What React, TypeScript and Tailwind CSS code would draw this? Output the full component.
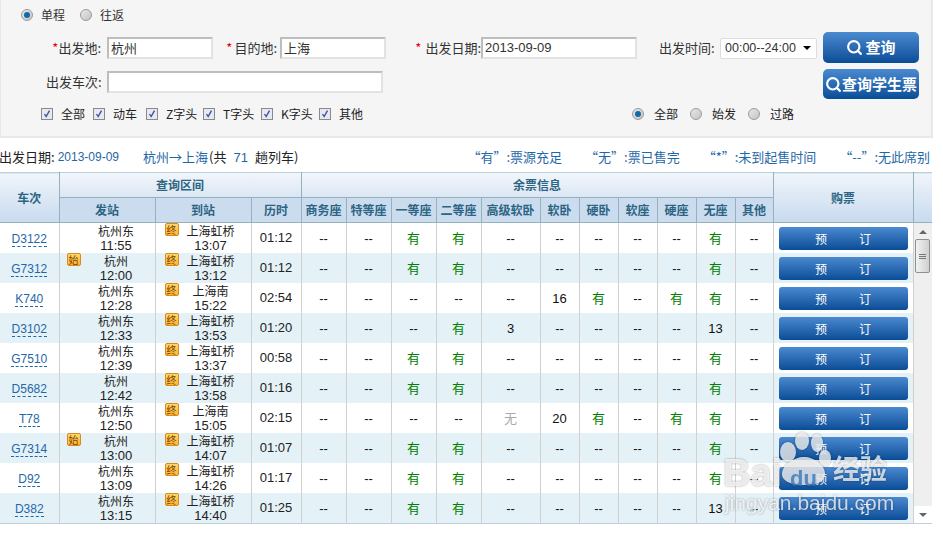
import React from 'react';
import { Search } from 'lucide-react';

const font = "font-['Noto_Sans_CJK_SC','Liberation_Sans',sans-serif]";
const latin = "font-['Liberation_Sans',sans-serif]";

interface Train {
  no: string;
  from: string;
  depart: string;
  to: string;
  arrive: string;
  span: string;
  start?: boolean;
  seats: string[];
}

const d = '--';
const gao = [d, d, '有', '有', d, d, d, d, d, '有', d];

const trains: Train[] = [
  { no: 'D3122', from: '杭州东', depart: '11:55', to: '上海虹桥', arrive: '13:07', span: '01:12', seats: gao },
  { no: 'G7312', from: '杭州', depart: '12:00', to: '上海虹桥', arrive: '13:12', span: '01:12', start: true, seats: gao },
  { no: 'K740', from: '杭州东', depart: '12:28', to: '上海南', arrive: '15:22', span: '02:54', seats: [d, d, d, d, d, '16', '有', d, '有', '有', d] },
  { no: 'D3102', from: '杭州东', depart: '12:33', to: '上海虹桥', arrive: '13:53', span: '01:20', seats: [d, d, d, '有', '3', d, d, d, d, '13', d] },
  { no: 'G7510', from: '杭州东', depart: '12:39', to: '上海虹桥', arrive: '13:37', span: '00:58', seats: gao },
  { no: 'D5682', from: '杭州', depart: '12:42', to: '上海虹桥', arrive: '13:58', span: '01:16', seats: gao },
  { no: 'T78', from: '杭州东', depart: '12:50', to: '上海南', arrive: '15:05', span: '02:15', seats: [d, d, d, d, '无', '20', '有', d, '有', '有', d] },
  { no: 'G7314', from: '杭州', depart: '13:00', to: '上海虹桥', arrive: '14:07', span: '01:07', start: true, seats: gao },
  { no: 'D92', from: '杭州东', depart: '13:09', to: '上海虹桥', arrive: '14:26', span: '01:17', seats: gao },
  { no: 'D382', from: '杭州东', depart: '13:15', to: '上海虹桥', arrive: '14:40', span: '01:25', seats: [d, d, '有', '有', d, d, d, d, d, '13', d] },
];

const colWidths = [59, 96, 96, 50, 45, 45, 45, 45, 59, 39, 39, 39, 39, 39, 38, 140, 19];
const seatHeads = ['商务座', '特等座', '一等座', '二等座', '高级软卧', '软卧', '硬卧', '软座', '硬座', '无座', '其他'];

const Radio = ({ on }: { on?: boolean }) => (
  <span className="flex h-3 w-3 shrink-0 items-center justify-center rounded-full border border-[#9a9a9a] bg-gradient-to-br from-[#e8e8e8] to-[#c4c4c4]">
    {on && <span className="h-1.5 w-1.5 rounded-full bg-[#0f6aa8]" />}
  </span>
);

const Check = () => (
  <span className="flex h-3 w-3 shrink-0 items-center justify-center border border-[#8a8a8a] bg-[#e6e9f2] text-[#3a4f9a]">
    <svg viewBox="0 0 12 12" className="h-2.5 w-2.5">
      <path d="M3 6l2 3 4-7" fill="none" stroke="currentColor" strokeWidth="1.6" />
    </svg>
  </span>
);

const Field = ({ value, width }: { value?: string; width: string }) => (
  <div className={`flex h-[22px] items-center border-2 border-[#e2e2e2] border-t-[#bdbdbd] border-l-[#bdbdbd] bg-white pb-0.5 pl-0.5 text-[13px] leading-none text-[#333] ${width}`}>
    {value}
  </div>
);

const Badge = ({ text }: { text: string }) => (
  <span className="flex h-[13px] w-[14px] items-center justify-center rounded-[2px] border border-[#d98a1c] bg-gradient-to-b from-[#ffd76a] to-[#ffb52e] text-[10px] leading-none text-[#7a4300]">
    {text}
  </span>
);

const blueBtn = 'bg-gradient-to-b from-[#4a8ad0] to-[#074d97]';

const Seat = ({ value }: { value: string }) => {
  if (value === '有') return <span className="text-[13px] text-[#008000]">有</span>;
  if (value === '无') return <span className="text-[13px] text-[#aaa]">无</span>;
  return <span className={`${latin} text-[13px] text-[#111]`}>{value}</span>;
};

const headTh = 'border-r border-b border-[#94b1bd] text-[12px] font-bold text-[#2b6583]';

const App = () => (
  <div className={`relative h-[534px] w-[943px] overflow-hidden bg-white ${font}`}>
    {/* search form */}
    <div className="h-[138px] w-[933px] border-r-2 border-b-2 border-l border-[#e8e8e8] bg-[#f5f5f5] text-[13px] text-[#333]">
      <div className="flex h-[30px] items-center pl-[20px] text-[12px]">
        <Radio on />
        <span className="ml-[8px] w-[26px]">单程</span>
        <span className="ml-[13px]"><Radio /></span>
        <span className="ml-[8px]">往返</span>
      </div>
      <div className="flex h-[70px]">
        <div className="w-[822px]">
          <div className="mt-[7px] flex h-[22px] items-center">
            <span className="w-[106px] pr-[6px] text-right"><b className="font-normal text-red-600">*</b>出发地:</span>
            <Field value="杭州" width="w-[106px]" />
            <span className="w-[67px] pr-[3px] text-right"><b className="mr-[2px] font-normal text-red-600">*</b>目的地:</span>
            <Field value="上海" width="w-[106px]" />
            <span className="w-[95px] text-right whitespace-nowrap"><b className="mr-[4px] font-normal text-red-600">*</b>出发日期:</span>
            <div className={latin}><Field value="2013-09-09" width="w-[156px]" /></div>
            <span className="ml-[22px] w-[61px]">出发时间:</span>
            <div className={`${latin} flex h-[21px] w-[97px] items-center justify-between rounded-[2px] border border-[#ddd] bg-white pr-[5px] pl-[4px] text-[12.5px] text-[#333]`}>
              00:00--24:00
              <span className="h-0 w-0 border-x-[4px] border-t-[4px] border-x-transparent border-t-black" />
            </div>
          </div>
          <div className="mt-[12px] flex items-center">
            <span className="w-[106px] pr-[6px] pl-[45px] whitespace-nowrap">出发车次:</span>
            <Field width="w-[276px]" />
          </div>
        </div>
        <div className="w-[96px] pt-[2px]">
          <div className={`flex h-[31px] items-center justify-center gap-0.5 rounded-[5px] text-[15px] font-bold text-white ${blueBtn}`}>
            <Search size={17} strokeWidth={3} />查询
          </div>
          <div className={`mt-[6px] flex h-[30px] items-center justify-center rounded-[5px] text-[15px] font-bold whitespace-nowrap text-white ${blueBtn}`}>
            <Search size={17} strokeWidth={3} />查询学生票
          </div>
        </div>
      </div>
      <div className="flex h-[28px] items-center pl-[40px] text-[12px] text-[#222]">
        <Check /><span className="ml-[8px] w-[32px]">全部</span>
        <Check /><span className="ml-[8px] w-[33px]">动车</span>
        <Check /><span className="ml-[8px] w-[37px]">Z字头</span>
        <Check /><span className="ml-[8px] w-[38px]">T字头</span>
        <Check /><span className="ml-[8px] w-[38px]">K字头</span>
        <Check /><span className="ml-[8px] w-[293px]">其他</span>
        <Radio on /><span className="ml-[10px] w-[36px]">全部</span>
        <Radio /><span className="ml-[10px] w-[36px]">始发</span>
        <Radio /><span className="ml-[10px]">过路</span>
      </div>
    </div>

    {/* summary line */}
    <div className="flex h-[34px] w-[932px] items-center justify-between pt-[4px] text-[13px] whitespace-nowrap">
      <div className="-ml-px flex items-center text-[#222]">
        出发日期:
        <span className={`${latin} ml-[3px] text-[12px] text-[#1f68a8]`}>2013-09-09</span>
        <span className="ml-[24px] text-[#1f68a8]">杭州→上海</span>
        <span className="ml-px">(共<span className={`${latin} mx-[7px] text-[#1f68a8]`}>71</span>趟列车)</span>
      </div>
      <div className="flex text-[#1f68a8]">
        <span className="mr-[23px]">“有”:票源充足</span>
        <span className="mr-[23px]">“无”:票已售完</span>
        <span className="mr-[23px]">“*”:未到起售时间</span>
        <span className="mr-[2px]">“--”:无此席别</span>
      </div>
    </div>

    {/* train table */}
    <table className="w-[932px] table-fixed border-collapse border-t border-b border-[#bcd0d8]">
      <colgroup>
        {colWidths.map((w, i) => (
          <col key={i} style={{ width: w }} />
        ))}
      </colgroup>
      <thead>
        <tr className="h-[25px] bg-gradient-to-b from-[#f2f6fc] to-[#dbe6f3]">
          <th rowSpan={2} className={`${headTh} bg-gradient-to-b from-[#f0f5fb] to-[#c8daee]`}>车次</th>
          <th colSpan={3} className={headTh}>查询区间</th>
          <th colSpan={11} className={headTh}>余票信息</th>
          <th rowSpan={2} className={`${headTh} bg-gradient-to-b from-[#f0f5fb] to-[#c8daee]`}>购票</th>
          <th rowSpan={2} className="border-b border-[#94b1bd] bg-gradient-to-b from-[#f0f5fb] to-[#c8daee]" />
        </tr>
        <tr className="h-[25px] bg-[#ccdcef]">
          <th className={headTh}>发站</th>
          <th className={headTh}>到站</th>
          <th className={headTh}>历时</th>
          {seatHeads.map((h) => (
            <th key={h} className={`${headTh} whitespace-nowrap`}>{h}</th>
          ))}
        </tr>
      </thead>
      <tbody>
        {trains.map((t, i) => (
          <tr key={t.no} className={`h-[30px] ${i % 2 ? 'bg-[#e4f1f7]' : 'bg-white'}`}>
            <td className="border-r border-[#d0d0d0] pb-[4px] text-center align-middle">
              <span className={`${latin} border-b border-dashed border-[#1f68a8] text-[12px] leading-[15px] text-[#1f68a8]`}>{t.no}</span>
            </td>
            <td className="border-r border-[#d0d0d0] p-0 align-middle">
              <div className="relative pl-[18px] text-center text-[12px] leading-[15px] text-[#222]">
                {t.start && <span className="absolute top-0 left-[7px]"><Badge text="始" /></span>}
                <div>{t.from}</div>
                <div className={`${latin} text-[13px]`}>{t.depart}</div>
              </div>
            </td>
            <td className="border-r border-[#d0d0d0] p-0 align-middle">
              <div className="relative text-center text-[12px] leading-[15px] text-[#222]">
                <span className="absolute top-0 left-[9px]"><Badge text="终" /></span>
                <div className="pl-[15px]">{t.to}</div>
                <div className={`${latin} pl-[15px] text-[13px]`}>{t.arrive}</div>
              </div>
            </td>
            <td className={`${latin} border-r border-[#d0d0d0] text-center text-[13px] text-[#222]`}>{t.span}</td>
            {t.seats.map((s, j) => (
              <td key={j} className="border-r border-[#d0d0d0] pb-[4px] text-center leading-none">
                <Seat value={s} />
              </td>
            ))}
            <td className="border-r border-[#d0d0d0] px-[5px] align-middle">
              <div className={`flex h-[23px] items-center justify-center gap-[32px] rounded-[3px] pt-0.5 text-[12px] text-white ${blueBtn}`}>
                <span>预</span>
                <span>订</span>
              </div>
            </td>
            {i === 0 && (
              <td rowSpan={10} className="bg-[#efefef] p-0 align-top">
                <div className="flex h-[300px] flex-col items-center justify-between">
                  <div className="flex w-full flex-col items-center">
                    <span className="mt-[7px] h-0 w-0 border-x-[4px] border-b-[4px] border-x-transparent border-b-[#666]" />
                    <div className="mt-[5px] flex h-[34px] w-[15px] flex-col items-center justify-center gap-[1px] rounded-[2px] border border-[#8f8f8f] bg-gradient-to-r from-[#f2f2f2] to-[#cfcfcf]">
                      <span className="h-px w-[7px] bg-[#777]" />
                      <span className="h-px w-[7px] bg-[#777]" />
                      <span className="h-px w-[7px] bg-[#777]" />
                    </div>
                  </div>
                  <div className="flex h-[17px] w-full items-center justify-center bg-white">
                    <span className="h-0 w-0 border-x-[4px] border-t-[4px] border-x-transparent border-t-[#666]" />
                  </div>
                </div>
              </td>
            )}
          </tr>
        ))}
      </tbody>
    </table>

    {/* site watermark */}
    <div className="pointer-events-none absolute top-[432px] left-[722px] h-[80px] w-[175px] text-white/75 drop-shadow-[0_0_1px_rgba(0,0,0,0.45)]">
      <svg viewBox="0 0 60 54" className="absolute top-0 left-[54px] h-[54px] w-[60px]" fill="currentColor">
        <ellipse cx="12" cy="20" rx="8" ry="10" />
        <ellipse cx="26" cy="9" rx="7" ry="9" />
        <ellipse cx="41" cy="11" rx="6" ry="9" />
        <ellipse cx="49" cy="26" rx="6" ry="8" />
        <path d="M6 42c0-9 12-17 22-17s21 8 21 17-10 11-21 11S6 50 6 42z" />
      </svg>
      <div className={`${latin} absolute top-[22px] left-[1px] text-[38px] leading-none font-bold`}>Bai</div>
      <div className={`${latin} absolute top-[36px] left-[68px] text-[22px] leading-none font-bold text-[#3a78b8]/80`}>du</div>
      <div className="absolute top-[22px] left-[111px] text-[27px] leading-none font-bold whitespace-nowrap">经验</div>
      <div className={`${latin} absolute top-[60px] left-[3px] text-[21px] leading-none whitespace-nowrap`}>jingyan.baidu.com</div>
    </div>
  </div>
);

export default App;
